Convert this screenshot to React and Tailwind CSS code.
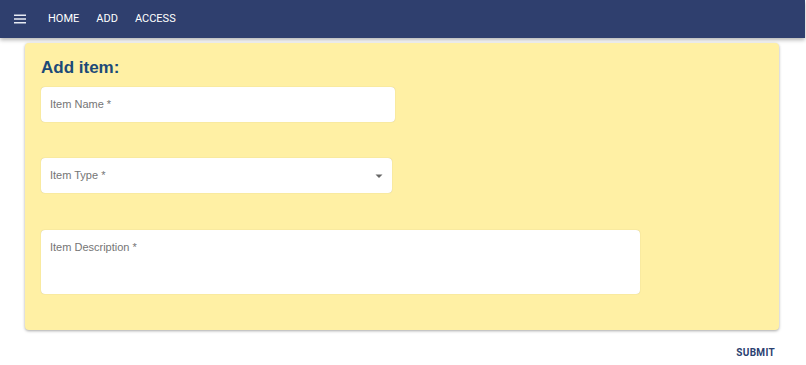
import React from 'react';

function Field({ label, className, select }) {
  return (
    <div className={`relative bg-white rounded shadow-[0_0_1px_rgba(0,0,0,0.25)] ${className}`}>
      <span className="absolute left-[9px] top-[9px] text-[11px] text-[#757575]">{label}</span>
      {select && (
        <svg className="absolute right-[8px] top-[13px]" width="10" height="10" viewBox="0 0 10 10">
          <path d="M1.5 3.5 L5 7 L8.5 3.5 Z" fill="#666" />
        </svg>
      )}
    </div>
  );
}

export default function App() {
  return (
    <div className="min-h-[365px] bg-white font-['Liberation_Sans',Arial,sans-serif]">
      {/* Header */}
      <div className="h-[38px] bg-[#2f3f6e] flex items-center pl-[14px] shadow-[0_2px_4px_rgba(0,0,0,0.3)] mr-px">
        <svg width="12" height="10" viewBox="0 0 12 10" className="mr-[22px]">
          <rect x="0" y="0.5" width="12" height="1.5" fill="#e8ebf3" />
          <rect x="0" y="4.25" width="12" height="1.5" fill="#e8ebf3" />
          <rect x="0" y="8" width="12" height="1.5" fill="#e8ebf3" />
        </svg>
        <div className="flex gap-[17px] text-[11px] text-white font-['Roboto',sans-serif]">
          <span>HOME</span>
          <span>ADD</span>
          <span>ACCESS</span>
        </div>
      </div>

      {/* Form card */}
      <div className="ml-[25px] mt-[5px] w-[754px] bg-[#fff0a4] rounded shadow-[0_1px_3px_rgba(0,0,0,0.35)] pl-[16px] pt-[15px] pb-[36px]">
        <h2 className="text-[17px] font-bold text-[#1c4a78] leading-[20px] mb-[9px]">Add item:</h2>
        <Field label="Item Name *" className="w-[354px] h-[35px]" />
        <Field label="Item Type *" className="w-[351px] h-[35px] mt-[36px]" select />
        <Field label="Item Description *" className="w-[599px] h-[64px] mt-[37px]" />
      </div>

      <div className="flex justify-end pr-[31px] pt-[15px]">
        <span className="text-[10px] font-bold text-[#2b4170] tracking-[0.3px] font-['Roboto',sans-serif]">SUBMIT</span>
      </div>
    </div>
  );
}
